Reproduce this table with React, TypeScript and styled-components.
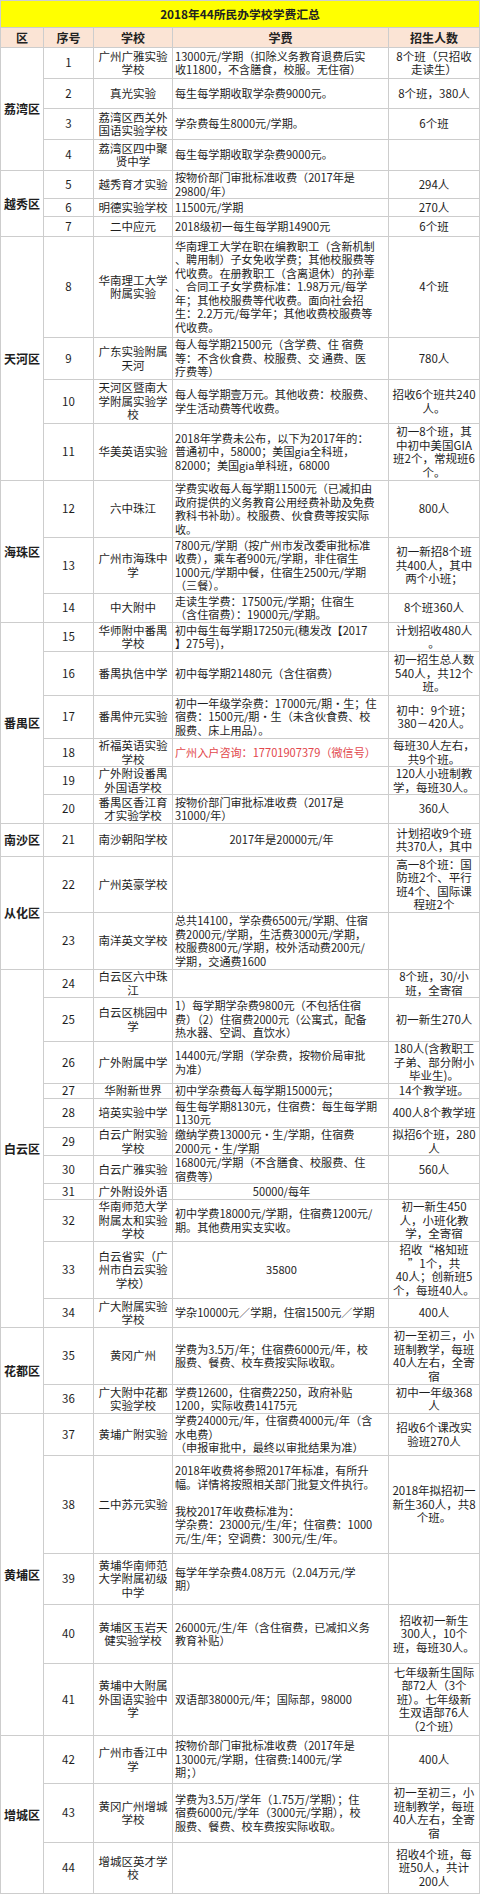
import React from 'react';
import styled, { createGlobalStyle } from 'styled-components';

const GlobalStyle = createGlobalStyle`
  html, body {
    margin: 0;
    padding: 0;
    background: #ffffff;
  }
`;

const Sheet = styled.div<{ $rows: string }>`
  display: grid;
  grid-template-columns: 42px 49px 78px 215px 90px;
  grid-template-rows: ${(p) => p.$rows};
  gap: 1px;
  padding: 1px;
  width: 480px;
  box-sizing: border-box;
  background: #cdcdcd;
  font-family: "Noto Sans CJK SC", "Noto Sans", sans-serif;
  font-size: 11.5px;
  line-height: 13.5px;
  color: #1e1e1e;
`;

const TitleCell = styled.div`
  grid-column: 1 / -1;
  display: flex;
  align-items: center;
  justify-content: center;
  background: #ffff00;
  font-weight: 700;
  font-size: 11.8px;
  color: #222;
`;

const HeaderCell = styled.div`
  display: flex;
  align-items: center;
  justify-content: center;
  background: #fbe4d5;
  font-weight: 700;
  font-size: 12px;
  color: #222;
`;

const DistrictCell = styled.div<{ $span: number }>`
  grid-row: span ${(p) => p.$span};
  display: flex;
  align-items: center;
  justify-content: center;
  background: #ffffff;
  font-weight: 700;
  font-size: 12px;
  white-space: nowrap;
`;

const Cell = styled.div`
  display: flex;
  flex-direction: column;
  justify-content: center;
  align-items: center;
  text-align: center;
  padding: 0 1px;
  background: #ffffff;
  overflow: hidden;
  min-width: 0;
  min-height: 0;
`;

const FeeCell = styled(Cell)<{ $align?: 'left' | 'center'; $tone?: 'red' }>`
  align-items: ${(p) => (p.$align === 'center' ? 'center' : 'flex-start')};
  text-align: ${(p) => (p.$align === 'center' ? 'center' : 'left')};
  padding: 0 0 0 2px;
  font-size: 11.1px;
  color: ${(p) => (p.$tone === 'red' ? '#e2474c' : 'inherit')};
`;

const Line = styled.span`
  display: block;
  white-space: nowrap;
  min-height: 13.5px;
`;

type Row = {
  no: number;
  h: number;
  school: string[];
  fee: string[];
  enroll: string[];
  feeAlign?: 'left' | 'center';
  feeTone?: 'red';
};

type District = { name: string; rows: Row[] };

const districts: District[] = [
  {
    name: '荔湾区',
    rows: [
      { no: 1, h: 31, school: ['广州广雅实验', '学校'], fee: ['13000元/学期（扣除义务教育退费后实', '收11800，不含膳食，校服。无住宿）'], enroll: ['8个班（只招收', '走读生）'] },
      { no: 2, h: 30, school: ['真光实验'], fee: ['每生每学期收取学杂费9000元。'], enroll: ['8个班，380人'] },
      { no: 3, h: 31, school: ['荔湾区西关外', '国语实验学校'], fee: ['学杂费每生8000元/学期。'], enroll: ['6个班'] },
      { no: 4, h: 31, school: ['荔湾区四中聚', '贤中学'], fee: ['每生每学期收取学杂费9000元。'], enroll: [] },
    ],
  },
  {
    name: '越秀区',
    rows: [
      { no: 5, h: 28, school: ['越秀育才实验'], fee: ['按物价部门审批标准收费（2017年是', '29800/年）'], enroll: ['294人'] },
      { no: 6, h: 18, school: ['明德实验学校'], fee: ['11500元/学期'], enroll: ['270人'] },
      { no: 7, h: 20, school: ['二中应元'], fee: ['2018级初一每生每学期14900元'], enroll: ['6个班'] },
    ],
  },
  {
    name: '天河区',
    rows: [
      {
        no: 8,
        h: 101,
        school: ['华南理工大学', '附属实验'],
        fee: [
          '华南理工大学在职在编教职工（含新机制',
          '、聘用制）子女免收学费；其他校服费等',
          '代收费。在册教职工（含离退休）的孙辈',
          '、合同工子女学费标准：1.98万元/每学',
          '年；其他校服费等代收费。面向社会招',
          '生：2.2万元/每学年；其他收费校服费等',
          '代收费。',
        ],
        enroll: ['4个班'],
      },
      { no: 9, h: 42, school: ['广东实验附属', '天河'], fee: ['每人每学期21500元（含学费、住 宿费', '等：不含伙食费、校服费、交 通费、医', '疗费等）'], enroll: ['780人'] },
      { no: 10, h: 44, school: ['天河区暨南大', '学附属实验学', '校'], fee: ['每人每学期壹万元。其他收费：校服费、', '学生活动费等代收费。'], enroll: ['招收6个班共240', '人。'] },
      { no: 11, h: 57, school: ['华美英语实验'], fee: ['2018年学费未公布，以下为2017年的：', '普通初中，58000；美国gia全科班，', '82000；美国gia单科班，68000'], enroll: ['初一8个班，其', '中初中美国GIA', '班2个，常规班6', '个。'] },
    ],
  },
  {
    name: '海珠区',
    rows: [
      { no: 12, h: 57, school: ['六中珠江'], fee: ['学费实收每人每学期11500元（已减扣由', '政府提供的义务教育公用经费补助及免费', '教科书补助）。校服费、伙食费等按实际', '收。'], enroll: ['800人'] },
      { no: 13, h: 56, school: ['广州市海珠中', '学'], fee: ['7800元/学期（按广州市发改委审批标准', '收费），乘车者900元/学期，非住宿生', '1000元/学期中餐，住宿生2500元/学期', '（三餐）。'], enroll: ['初一新招8个班', '共400人，其中', '两个小班；'] },
      { no: 14, h: 29, school: ['中大附中'], fee: ['走读生学费：17500元/学期；住宿生', '（含住宿费）：19000元/学期。'], enroll: ['8个班360人'] },
    ],
  },
  {
    name: '番禺区',
    rows: [
      { no: 15, h: 29, school: ['华师附中番禺', '学校'], fee: ['初中每生每学期17250元(穗发改【2017', '】275号)，'], enroll: ['计划招收480人', '。'] },
      { no: 16, h: 44, school: ['番禺执信中学'], fee: ['初中每学期21480元（含住宿费）'], enroll: ['初一招生总人数', '540人，共12个', '班。'] },
      { no: 17, h: 43, school: ['番禺仲元实验'], fee: ['初中一年级学杂费：17000元/期•生；住', '宿费：1500元/期•生（未含伙食费、校', '服费、床上用品）。'], enroll: ['初中：9个班；', '380－420人。'] },
      { no: 18, h: 28, school: ['祈福英语实验', '学校'], fee: ['广州入户咨询：17701907379（微信号）'], feeTone: 'red', enroll: ['每班30人左右，', '共9个班。'] },
      { no: 19, h: 28, school: ['广外附设番禺', '外国语学校'], fee: [], enroll: ['120人小班制教', '学，每班30人。'] },
      { no: 20, h: 29, school: ['番禺区香江育', '才实验学校'], fee: ['按物价部门审批标准收费（2017是', '31000/年）'], enroll: ['360人'] },
    ],
  },
  {
    name: '南沙区',
    rows: [
      { no: 21, h: 33, school: ['南沙朝阳学校'], fee: ['2017年是20000元/年'], feeAlign: 'center', enroll: ['计划招收9个班', '共370人，其中'] },
    ],
  },
  {
    name: '从化区',
    rows: [
      { no: 22, h: 56, school: ['广州英豪学校'], fee: [], enroll: ['高一8个班：国', '防班2个、平行', '班4个、国际课', '程班2个'] },
      { no: 23, h: 57, school: ['南洋英文学校'], fee: ['总共14100，学杂费6500元/学期、住宿', '费2000元/学期，生活费3000元/学期，', '校服费800元/学期，校外活动费200元/', '学期，交通费1600'], enroll: [] },
    ],
  },
  {
    name: '白云区',
    rows: [
      { no: 24, h: 28, school: ['白云区六中珠', '江'], fee: [], enroll: ['8个班，30/小', '班，全寄宿'] },
      { no: 25, h: 44, school: ['白云区桃园中', '学'], fee: ['1）每学期学杂费9800元（不包括住宿', '费）（2）住宿费2000元（公寓式，配备', '热水器、空调、直饮水）'], enroll: ['初一新生270人'] },
      { no: 26, h: 42, school: ['广外附属中学'], fee: ['14400元/学期（学杂费，按物价局审批', '为准）'], enroll: ['180人(含教职工', '子弟、部分附小', '毕业生)。'] },
      { no: 27, h: 15, school: ['华附新世界'], fee: ['初中学杂费每人每学期15000元；'], enroll: ['14个教学班。'] },
      { no: 28, h: 29, school: ['培英实验中学'], fee: ['每生每学期8130元，住宿费：每生每学期', '1130元'], enroll: ['400人8个教学班'] },
      { no: 29, h: 28, school: ['白云广附实验', '学校'], fee: ['缴纳学费13000元・生/学期，住宿费', '2000元・生/学期'], enroll: ['拟招6个班，280', '人'] },
      { no: 30, h: 28, school: ['白云广雅实验'], fee: ['16800元/学期（不含膳食、校服费、住', '宿费等）'], enroll: ['560人'] },
      { no: 31, h: 16, school: ['广外附设外语'], fee: ['50000/每年'], feeAlign: 'center', enroll: [] },
      { no: 32, h: 42, school: ['华南师范大学', '附属太和实验', '学校'], fee: ['初中学费18000元/学期，住宿费1200元/', '期。其他费用实支实收。'], enroll: ['初一新生450', '人，小班化教', '学，全寄宿'] },
      { no: 33, h: 57, school: ['白云省实（广', '州市白云实验', '学校）'], fee: ['35800'], feeAlign: 'center', enroll: ['招收“格知班', '”1个，共', '40人；创新班5', '个，每班40人。'] },
      { no: 34, h: 29, school: ['广大附属实验', '学校'], fee: ['学杂10000元／学期，住宿1500元／学期'], enroll: ['400人'] },
    ],
  },
  {
    name: '花都区',
    rows: [
      { no: 35, h: 57, school: ['黄冈广州'], fee: ['学费为3.5万/年；住宿费6000元/年，校', '服费、餐费、校车费按实际收取。'], enroll: ['初一至初三，小', '班制教学，每班', '40人左右，全寄', '宿'] },
      { no: 36, h: 29, school: ['广大附中花都', '实验学校'], fee: ['学费12600，住宿费2250，政府补贴', '1200，实际收费14175元'], enroll: ['初中一年级368', '人'] },
    ],
  },
  {
    name: '黄埔区',
    rows: [
      { no: 37, h: 42, school: ['黄埔广附实验'], fee: ['学费24000元/年，住宿费4000元/年（含', '水电费）', '（申报审批中，最终以审批结果为准）'], enroll: ['招收6个课改实', '验班270人'] },
      {
        no: 38,
        h: 98,
        school: ['二中苏元实验'],
        fee: [
          '2018年收费将参照2017年标准，有所升',
          '幅。详情将按照相关部门批复文件执行。',
          '',
          '我校2017年收费标准为：',
          '学杂费：23000元/生/年；住宿费：1000',
          '元/生/年；空调费：300元/生/年。',
        ],
        enroll: ['2018年拟招初一', '新生360人，共8', '个班。'],
      },
      { no: 39, h: 51, school: ['黄埔华南师范', '大学附属初级', '中学'], fee: ['每学年学杂费4.08万元（2.04万元/学', '期）'], enroll: [] },
      { no: 40, h: 59, school: ['黄埔区玉岩天', '健实验学校'], fee: ['26000元/生/年（含住宿费，已减扣义务', '教育补贴）'], enroll: ['招收初一新生', '300人，10个', '班，每班30人。'] },
      { no: 41, h: 72, school: ['黄埔中大附属', '外国语实验中', '学'], fee: ['双语部38000元/年；国际部，98000'], enroll: ['七年级新生国际', '部72人（3个', '班）。七年级新', '生双语部76人', '（2个班）'] },
    ],
  },
  {
    name: '增城区',
    rows: [
      { no: 42, h: 48, school: ['广州市香江中', '学'], fee: ['按物价部门审批标准收费（2017年是', '13000元/学期，住宿费:1400元/学', '期；）'], enroll: ['400人'] },
      { no: 43, h: 59, school: ['黄冈广州增城', '学校'], fee: ['学费为3.5万/学年（1.75万/学期）；住', '宿费6000元/学年（3000元/学期），校', '服费、餐费、校车费按实际收取。'], enroll: ['初一至初三，小', '班制教学，每班', '40人左右，全寄', '宿'] },
      { no: 44, h: 51, school: ['增城区英才学', '校'], fee: [], enroll: ['招收4个班，每', '班50人，共计', '200人'] },
    ],
  },
];

const headers = ['区', '序号', '学校', '学费', '招生人数'];

const Lines: React.FC<{ lines: string[] }> = ({ lines }) => (
  <>
    {lines.map((text, i) => (
      <Line key={i}>{text || '\u00a0'}</Line>
    ))}
  </>
);

const App: React.FC = () => {
  const rowHeights = [27, 20, ...districts.flatMap((d) => d.rows.map((r) => r.h))];
  const template = rowHeights.map((h) => `${h - 1}px`).join(' ');

  return (
    <>
      <GlobalStyle />
      <Sheet $rows={template}>
        <TitleCell>2018年44所民办学校学费汇总</TitleCell>
        {headers.map((h) => (
          <HeaderCell key={h}>{h}</HeaderCell>
        ))}
        {districts.map((d) => (
          <React.Fragment key={d.name}>
            <DistrictCell $span={d.rows.length}>{d.name}</DistrictCell>
            {d.rows.map((r) => (
              <React.Fragment key={r.no}>
                <Cell>{r.no}</Cell>
                <Cell>
                  <Lines lines={r.school} />
                </Cell>
                <FeeCell $align={r.feeAlign} $tone={r.feeTone}>
                  <Lines lines={r.fee} />
                </FeeCell>
                <Cell>
                  <Lines lines={r.enroll} />
                </Cell>
              </React.Fragment>
            ))}
          </React.Fragment>
        ))}
      </Sheet>
    </>
  );
};

export default App;
